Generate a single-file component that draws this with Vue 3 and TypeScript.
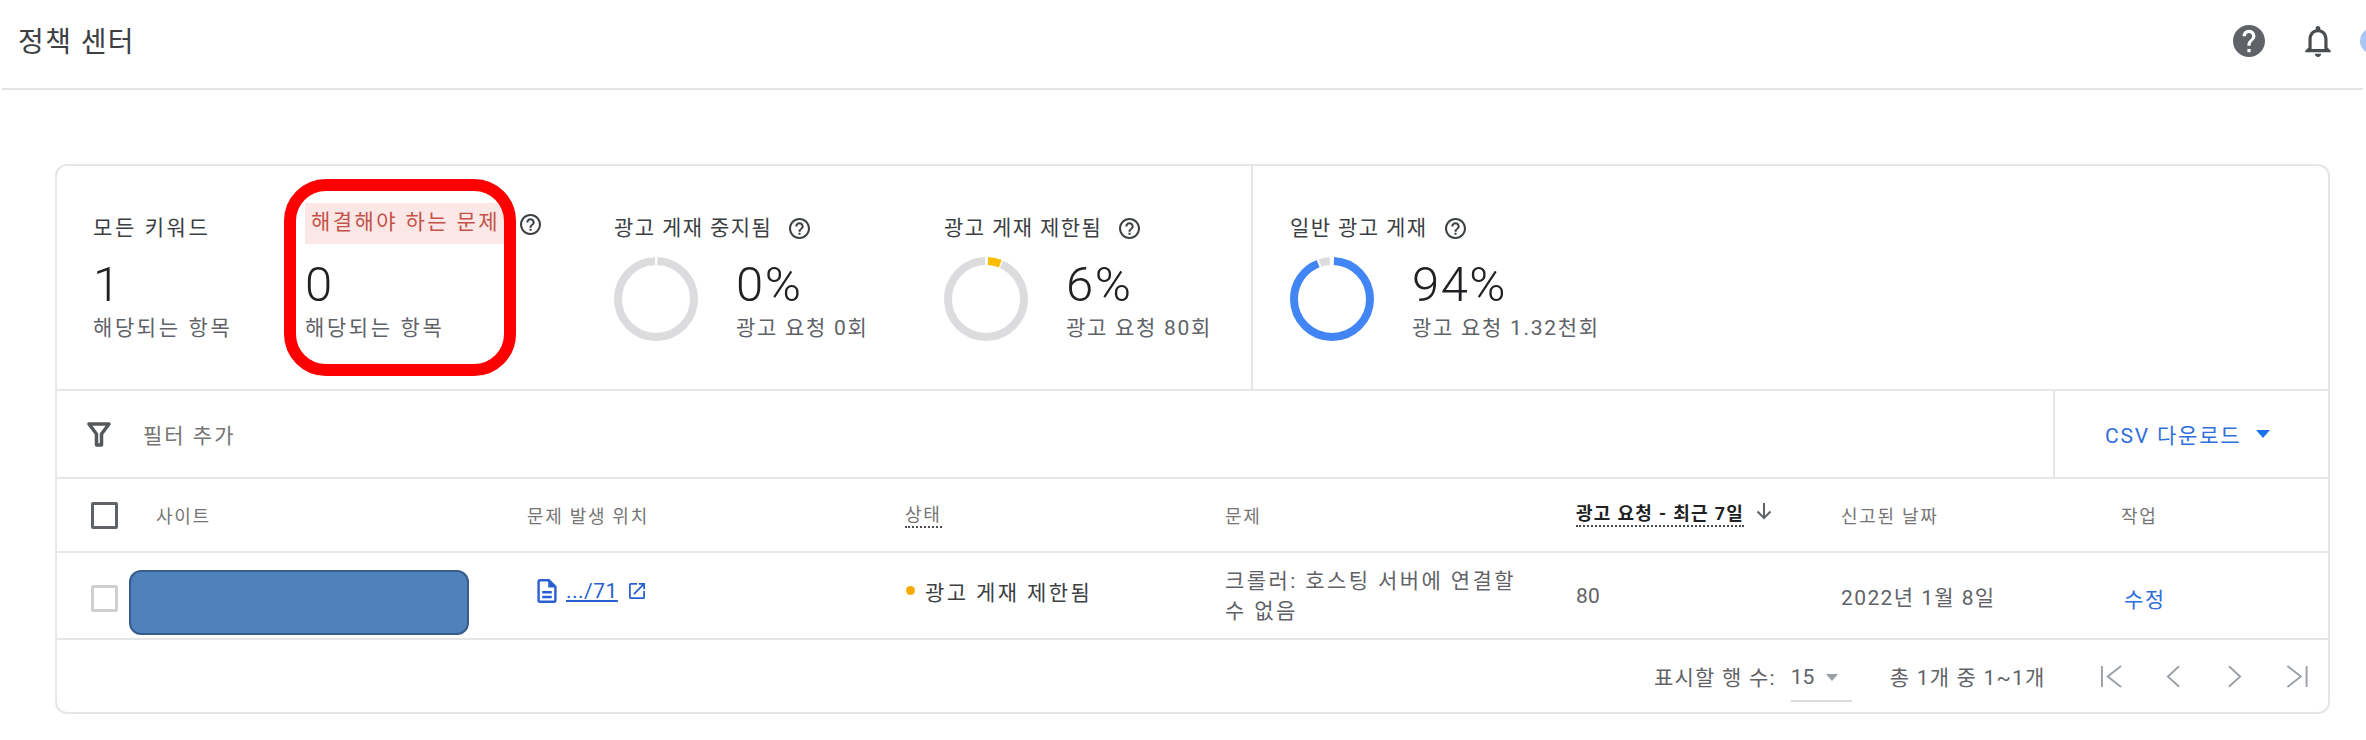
<script setup lang="ts">
interface Segment {
  color: string;
  start: number;
  end: number;
}

interface Stat {
  label: string;
  value: string;
  sub: string;
  width: number;
  help?: boolean;
  alert?: boolean;
  segments?: Segment[];
}

const GRAY = "#dcdcdf";
const RADIUS = 38;
const CIRC = 2 * Math.PI * RADIUS;

const stats: Stat[] = [
  { label: "모든 키워드", value: "1", sub: "해당되는 항목", width: 212 },
  { label: "해결해야 하는 문제", value: "0", sub: "해당되는 항목", width: 309, help: true, alert: true },
  {
    label: "광고 게재 중지됨",
    value: "0%",
    sub: "광고 요청 0회",
    width: 330,
    help: true,
    segments: [{ color: GRAY, start: 2, end: 358 }],
  },
  {
    label: "광고 게재 제한됨",
    value: "6%",
    sub: "광고 요청 80회",
    width: 343,
    help: true,
    segments: [
      { color: "#fbbc04", start: 3, end: 22 },
      { color: GRAY, start: 24, end: 358 },
    ],
  },
  {
    label: "일반 광고 게재",
    value: "94%",
    sub: "광고 요청 1.32천회",
    width: 500,
    help: true,
    segments: [
      { color: "#4285f4", start: 3, end: 338 },
      { color: GRAY, start: 341, end: 356 },
    ],
  },
];

const columns = ["문제 발생 위치", "상태", "문제"];

function dash(seg: Segment) {
  const len = ((seg.end - seg.start) / 360) * CIRC;
  return `${len} ${CIRC - len}`;
}

function offset(seg: Segment) {
  return -(seg.start / 360) * CIRC;
}
</script>

<template>
  <div class="page">
    <header class="topbar">
      <span class="title">정책 센터</span>
      <svg class="top-help" viewBox="2 2 20 20">
        <path d="M12 2C6.48 2 2 6.48 2 12s4.48 10 10 10 10-4.48 10-10S17.52 2 12 2zm1 17h-2v-2h2v2zm2.07-7.75l-.9.92C13.45 12.9 13 13.5 13 15h-2v-.5c0-1.1.45-2.1 1.17-2.83l1.24-1.26c.37-.36.59-.86.59-1.41 0-1.1-.9-2-2-2s-2 .9-2 2H8c0-2.21 1.79-4 4-4s4 1.79 4 4c0 .88-.36 1.68-.93 2.25z" />
      </svg>
      <svg class="bell" viewBox="4 2.5 16 19.5">
        <path d="M12 22c1.1 0 2-.9 2-2h-4c0 1.1.9 2 2 2zm6-6v-5c0-3.07-1.63-5.64-4.5-6.32V4c0-.83-.67-1.5-1.5-1.5s-1.5.67-1.5 1.5v.68C7.64 5.36 6 7.92 6 11v5l-2 2v1h16v-1l-2-2zm-2 1H8v-6c0-2.48 1.51-4.5 4-4.5s4 2.02 4 4.5v6z" />
      </svg>
      <span class="avatar" />
    </header>

    <main class="main">
      <section class="card">
        <!-- Summary -->
        <div class="stats">
          <div
            v-for="(stat, i) in stats"
            :key="stat.label"
            class="stat"
            :class="{ 'after-divider': i === 4 }"
            :style="{ width: stat.width + 'px' }"
          >
            <div class="label-row">
              <span class="label" :class="{ alert: stat.alert }">{{ stat.label }}</span>
              <svg v-if="stat.help" class="help" viewBox="2 2 20 20">
                <path d="M11 18h2v-2h-2v2zm1-16C6.48 2 2 6.48 2 12s4.48 10 10 10 10-4.48 10-10S17.52 2 12 2zm0 18c-4.41 0-8-3.59-8-8s3.59-8 8-8 8 3.59 8 8-3.59 8-8 8zm0-14c-2.21 0-4 1.79-4 4h2c0-1.1.9-2 2-2s2 .9 2 2c0 2-3 1.75-3 5h2c0-2.25 3-2.5 3-5 0-2.21-1.79-4-4-4z" />
              </svg>
            </div>
            <div class="stat-body">
              <svg v-if="stat.segments" class="ring" viewBox="0 0 84 84">
                <circle
                  v-for="seg in stat.segments"
                  :key="seg.start"
                  cx="42"
                  cy="42"
                  :r="RADIUS"
                  fill="none"
                  stroke-width="8"
                  :stroke="seg.color"
                  :stroke-dasharray="dash(seg)"
                  :stroke-dashoffset="offset(seg)"
                  transform="rotate(-90 42 42)"
                />
              </svg>
              <div>
                <div class="value">{{ stat.value }}</div>
                <div class="sub">{{ stat.sub }}</div>
              </div>
            </div>
          </div>
          <!-- annotation drawn on top of the screenshot -->
          <div class="callout" />
        </div>

        <!-- Filter bar -->
        <div class="filter">
          <div class="filter-left">
            <svg class="funnel" viewBox="0 0 24 25">
              <path d="M2 2h20L14.5 12v11h-5V12z" fill="none" stroke="#55585b" stroke-width="3.5" stroke-linejoin="round" />
            </svg>
            <span>필터 추가</span>
          </div>
          <div class="csv">CSV 다운로드 <i class="caret blue" /></div>
        </div>

        <!-- Table -->
        <div class="row head">
          <div class="cell check-cell"><span class="checkbox" /></div>
          <div class="cell">사이트</div>
          <div class="cell">{{ columns[0] }}</div>
          <div class="cell"><span class="dotted">{{ columns[1] }}</span></div>
          <div class="cell">{{ columns[2] }}</div>
          <div class="cell sorted">
            <span class="dotted strong">광고 요청 - 최근 7일</span>
            <svg class="arrow" viewBox="0 0 20 20">
              <path d="M10 2v15M3.5 10.5 10 17l6.5-6.5" fill="none" stroke="#5f6368" stroke-width="2" />
            </svg>
          </div>
          <div class="cell">신고된 날짜</div>
          <div class="cell">작업</div>
        </div>

        <div class="row data">
          <div class="cell check-cell"><span class="checkbox off" /></div>
          <div class="cell"><div class="redact" /></div>
          <div class="cell loc">
            <svg class="doc" viewBox="4 2 16 20">
              <path d="M8 16h8v2H8zm0-4h8v2H8zm6-10H6c-1.1 0-2 .9-2 2v16c0 1.1.89 2 1.99 2H18c1.1 0 2-.9 2-2V8l-6-6zm4 18H6V4h7v5h5v11z" />
            </svg>
            <a class="link">.../71</a>
            <svg class="ext" viewBox="3 3 18 18">
              <path d="M19 19H5V5h7V3H5c-1.11 0-2 .9-2 2v14c0 1.1.89 2 2 2h14c1.1 0 2-.9 2-2v-7h-2v7zM14 3v2h3.59l-9.83 9.83 1.41 1.41L19 6.41V10h2V3h-7z" />
            </svg>
          </div>
          <div class="cell state"><i class="dot" />광고 게재 제한됨</div>
          <div class="cell problem">크롤러: 호스팅 서버에 연결할<br />수 없음</div>
          <div class="cell num">80</div>
          <div class="cell num date">2022년 1월 8일</div>
          <div class="cell action">수정</div>
        </div>

        <!-- Pagination -->
        <div class="pager">
          <span class="rows-label">표시할 행 수:</span>
          <span class="rows-select">15<i class="caret" /></span>
          <span class="range">총 1개 중 1~1개</span>
          <svg class="pg first" viewBox="0 0 24 24"><path d="M2 1v22M22 1 8 12l14 11" /></svg>
          <svg class="pg prev" viewBox="0 0 15 24"><path d="M14 1 2 12l12 11" /></svg>
          <svg class="pg next" viewBox="0 0 15 24"><path d="M1 1l12 11L1 23" /></svg>
          <svg class="pg last" viewBox="0 0 24 24"><path d="M22 1v22M2 1l14 11L2 23" /></svg>
        </div>
      </section>
    </main>
  </div>
</template>

<style>
html,
body {
  margin: 0;
  background: #fff;
}
</style>

<style scoped>
* {
  box-sizing: border-box;
}

.page {
  width: 2366px;
  height: 740px;
  overflow: hidden;
  font-family: Roboto, "Noto Sans CJK KR", sans-serif;
  color: #5f6368;
  font-size: 21px;
  letter-spacing: 1.4px;
}

/* ── Top bar ───────────────────────── */

.topbar {
  height: 90px;
  margin: 0 3px 0 2px;
  padding-left: 16px;
  display: flex;
  align-items: center;
  border-bottom: 2px solid #e4e4e4;
}

.title {
  font-size: 28px;
  color: #3c4043;
  margin: -8px auto 0 0;
  letter-spacing: 1.4px;
}

.top-help {
  width: 32px;
  height: 32px;
  fill: #5f6368;
  margin-right: 40px;
  margin-top: -6px;
}

.bell {
  width: 26px;
  height: 31px;
  fill: #4a4d50;
  margin-right: 29px;
  margin-top: -6px;
}

.avatar {
  width: 26px;
  height: 26px;
  border-radius: 50%;
  background: #a9c6f5;
  margin: -6px -23px 0 0;
  flex-shrink: 0;
}

/* ── Card ──────────────────────────── */

.main {
  padding: 74px 0 0 55px;
}

.card {
  width: 2275px;
  height: 550px;
  border: 2px solid #e6e6e6;
  border-radius: 12px;
}

.stats {
  position: relative;
  height: 225px;
  display: flex;
  border-bottom: 2px solid #e6e6e6;
}

.stat {
  padding: 47px 0 0 36px;
}

.stat:first-child .label,
.stat:nth-child(-n + 2) .sub {
  letter-spacing: 2.6px;
}

.stat.after-divider {
  border-left: 2px solid #e6e6e6;
  padding-left: 37px;
}

.label-row {
  height: 30px;
  display: flex;
  align-items: center;
}

.label {
  color: #3c4043;
  line-height: 30px;
}

.label.alert {
  margin: -10px 0 -1px 0;
  padding: 4px 8px 7px 6px;
  background: #fbe7e5;
  color: #c4524a;
  letter-spacing: 2.4px;
}

.help {
  width: 21px;
  height: 21px;
  margin-left: 17px;
  fill: #3c4043;
}

.alert + .help {
  margin-left: 12px;
  margin-top: -8px;
}

.stat-body {
  margin-top: 14px;
  display: flex;
  gap: 38px;
}

.ring {
  width: 84px;
  height: 84px;
  flex-shrink: 0;
}

.value {
  font-size: 49px;
  font-weight: 300;
  line-height: 56px;
  color: #202124;
  letter-spacing: 1.5px;
}

.sub {
  line-height: 30px;
  letter-spacing: 1.7px;
  white-space: nowrap;
}

.callout {
  position: absolute;
  left: 227px;
  top: 13px;
  width: 232px;
  height: 197px;
  border: 12px solid #f00;
  border-radius: 42px;
  pointer-events: none;
}

/* ── Filter bar ────────────────────── */

.filter {
  height: 88px;
  display: flex;
  border-bottom: 2px solid #e6e6e6;
}

.filter-left {
  flex: 1;
  display: flex;
  align-items: center;
  padding-left: 30px;
  gap: 32px;
  color: #757575;
  letter-spacing: 2px;
}

.funnel {
  width: 24px;
  height: 25px;
}

.csv {
  width: 275px;
  border-left: 2px solid #e6e6e6;
  padding-left: 50px;
  display: flex;
  align-items: center;
  color: #2f6fdc;
  letter-spacing: 1.8px;
  white-space: pre;
}

.caret {
  display: inline-block;
  border-left: 6px solid transparent;
  border-right: 6px solid transparent;
  border-top: 7px solid #9aa0a6;
  margin-left: 12px;
}

.caret.blue {
  border-left-width: 7px;
  border-right-width: 7px;
  border-top: 8px solid #1a73e8;
  margin-left: 8px;
}

/* ── Table ─────────────────────────── */

.row {
  display: grid;
  grid-template-columns: 99px 371px 378px 320px 351px 265px 280px 1fr;
  align-items: center;
  border-bottom: 2px solid #e6e6e6;
}

.head {
  height: 74px;
  font-size: 18px;
  color: #757575;
  letter-spacing: 1.7px;
}

.data {
  height: 87px;
}

.check-cell {
  padding-left: 34px;
  display: flex;
}

.checkbox {
  width: 27px;
  height: 27px;
  border: 3px solid #5f6368;
  border-radius: 2px;
}

.checkbox.off {
  border-color: #cfcfcf;
  margin-top: 6px;
}

.dotted {
  line-height: 1.2;
  padding-bottom: 1px;
  border-bottom: 2px dotted #4a4d50;
}

.strong {
  color: #202124;
  font-weight: 700;
  letter-spacing: 1.3px;
}

.sorted {
  display: flex;
  align-items: center;
  gap: 10px;
  white-space: nowrap;
}

.arrow {
  width: 20px;
  height: 20px;
  margin-top: -8px;
}

.redact {
  width: 340px;
  height: 65px;
  margin: 14px 0 0 -27px;
  background: #4f81bd;
  border: 2px solid #385d8a;
  border-radius: 12px;
}

.loc {
  display: flex;
  align-items: center;
  padding: 0 0 10px 10px;
}

.doc {
  width: 20px;
  height: 24px;
  fill: #2a5fcf;
}

.link {
  margin-left: 9px;
  color: #2a5fcf;
  text-decoration: underline;
  letter-spacing: 0.5px;
}

.ext {
  width: 16px;
  height: 16px;
  margin-left: 11px;
  fill: #2a5fcf;
}

.state {
  display: flex;
  align-items: center;
  padding-bottom: 10px;
  color: #3c4043;
  letter-spacing: 2.4px;
}

.dot {
  width: 9px;
  height: 9px;
  border-radius: 50%;
  background: #f9ab00;
  margin: 0 10px 0 1px;
}

.problem {
  line-height: 30px;
  letter-spacing: 2.4px;
}

.num {
  letter-spacing: 0.2px;
}

.date {
  letter-spacing: 1.4px;
}

.action {
  color: #2f6fdc;
  padding: 5px 0 0 3px;
}

/* ── Pagination ────────────────────── */

.pager {
  height: 72px;
  display: flex;
  align-items: center;
  padding-left: 1597px;
  white-space: nowrap;
  letter-spacing: 1.2px;
}

.rows-select {
  width: 61px;
  height: 37px;
  margin: 15px 0 0 15px;
  padding-bottom: 11px;
  display: flex;
  align-items: center;
  border-bottom: 2px solid #dadce0;
  letter-spacing: 0;
}

.range {
  margin-left: 38px;
}

.pg {
  height: 23px;
  fill: none;
  stroke: #9aa0a6;
  stroke-width: 2;
}

.first {
  width: 23px;
  margin-left: 54px;
}

.prev {
  width: 14px;
  margin-left: 43px;
}

.next {
  width: 14px;
  margin-left: 48px;
}

.last {
  width: 24px;
  margin-left: 43px;
}
</style>
